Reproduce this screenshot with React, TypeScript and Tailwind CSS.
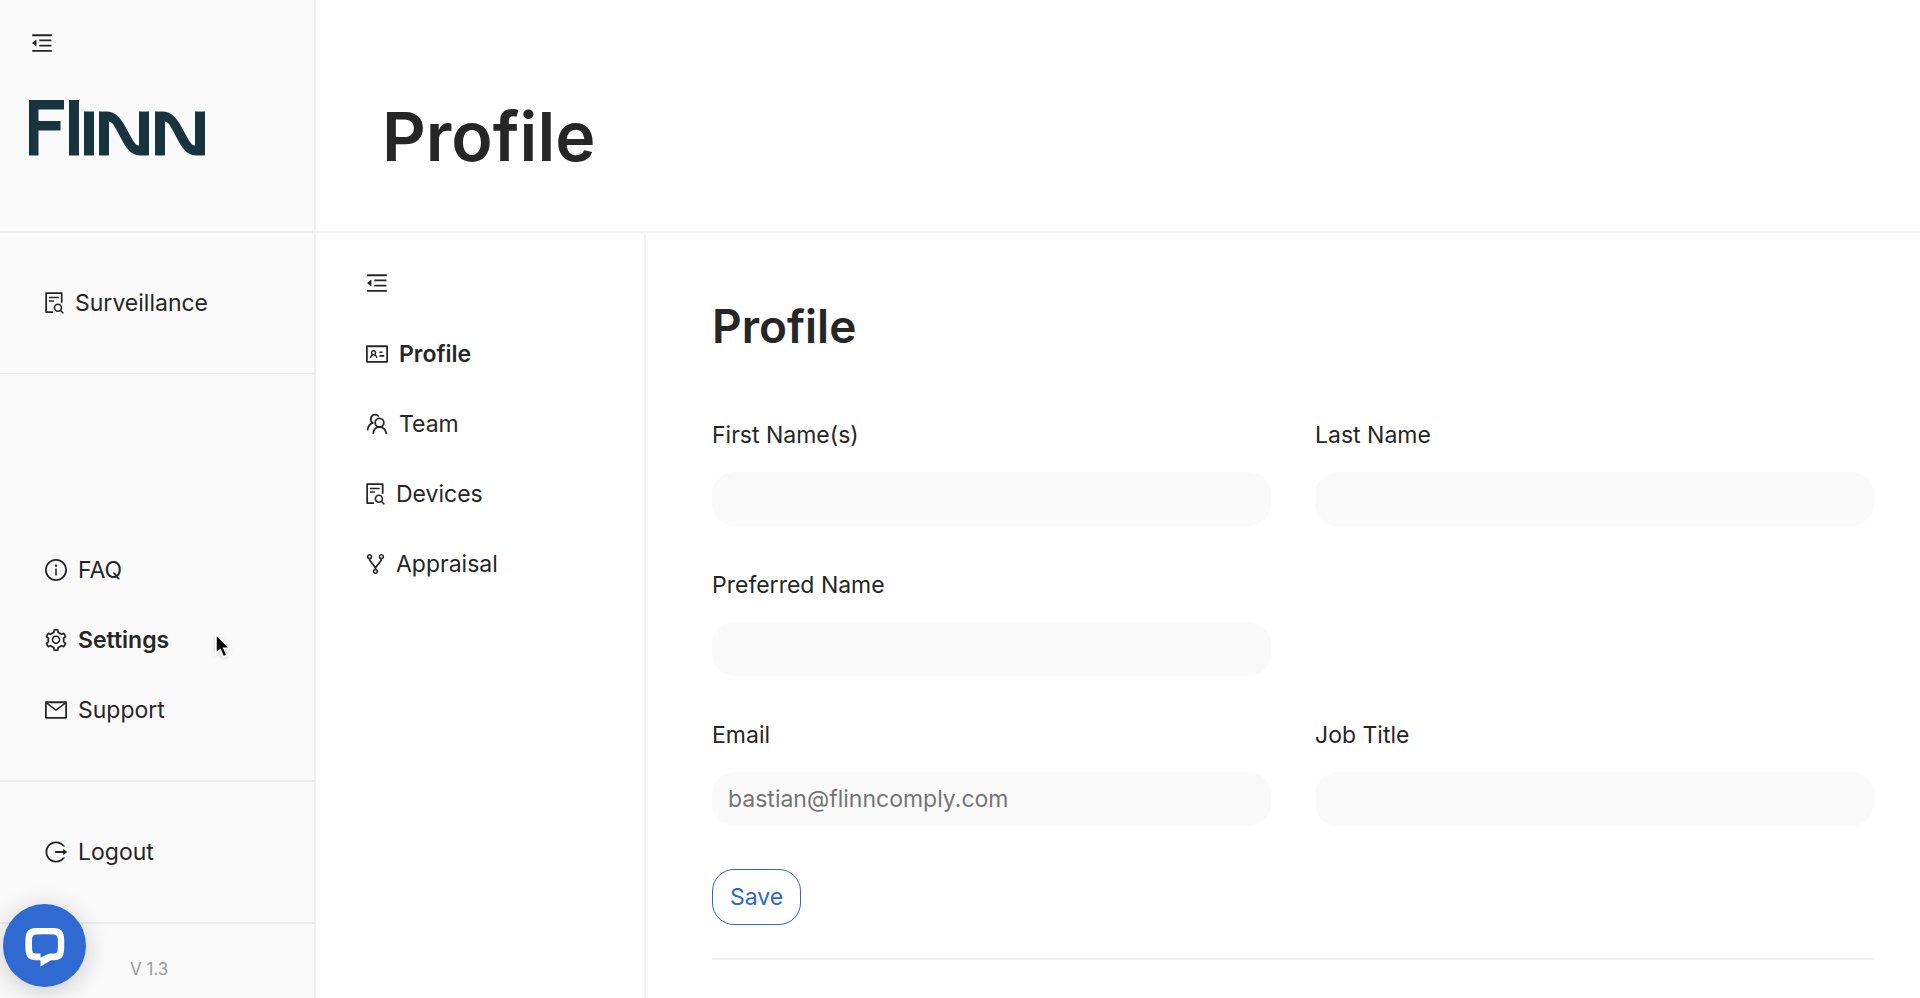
import { useState } from 'react';
import {
  AiOutlineFileSearch,
  AiOutlineFork,
  AiOutlineIdcard,
  AiOutlineInfoCircle,
  AiOutlineLogout,
  AiOutlineMail,
  AiOutlineMenuFold,
  AiOutlineSetting,
} from 'react-icons/ai';

// Trims the empty margin that the icons carry in their 1024 grid
const wide = { viewBox: '64 64 896 896', width: 22, height: 22, className: 'h-[22px] w-[22px]' };
const narrow = { viewBox: '128 64 768 896', width: 19, height: 22, className: 'h-[22px] w-[19px]' };

const Logo = () => (
  <svg width="177" height="56" viewBox="0 0 177 56" fill="#18343f" aria-label="Flinn">
    <path d="M0 0H35V9.500H9.500V21H31.500V30.500H9.500V55.500H0Z" />
    <path d="M40 0H50V55.500H40Z" />
    <path d="M55 11.500H65V55.500H55Z" />
    <path id="n" d="M70 11.500H77C86 11.500 91 17 96 26L102 37C105 42.500 107 45.500 110 45.500V11.500H120V55.500H112C104 55.500 99 51 94 42L87 29C84 24 83 22 80 21.500V55.500H70Z" />
    <use href="#n" x="56" />
  </svg>
);

const TeamIcon = () => (
  <svg width="22" height="22" viewBox="0 0 22 22" fill="none" stroke="currentColor" strokeWidth="1.800" strokeLinecap="round">
    <circle cx="13.500" cy="9.700" r="4.300" />
    <path d="M7.300 20.200C7.700 16.500 10 14.100 13.500 14.100S19.500 16.500 20.300 20.200" />
    <path d="M12.300 3C10.300 .9 6.700 1.200 5.300 3.900C4.300 6.200 4.700 8.300 6.600 9.900C3.700 11.200 2 13.500 1.700 16.600" />
  </svg>
);

const ChatIcon = () => (
  <svg width="40" height="39" viewBox="0 0 40 39" fill="none">
    <path
      fill="#fff"
      fillRule="evenodd"
      d="M10 0Q20 -.8 30 0Q38.500 .5 39 9Q39.500 16 39 23Q38.500 32 30 32.200H26L15.500 38.500V32.200H10Q1 32 .6 23Q.2 16 .6 9Q1 .5 10 0ZM10.500 6.500Q7.500 7 7.200 10Q6.800 16 7.200 22Q7.500 25.500 10.500 25.500H15.500V29.500L24.500 25.500H29.500Q32.300 25.500 32.700 22Q33.100 16 32.700 10Q32.300 7 29.500 6.500Q20 5.800 10.500 6.500Z"
    />
  </svg>
);

const Cursor = () => (
  <svg className="pointer-events-none absolute left-[213px] top-[632px] drop-shadow-sm" width="20" height="28" viewBox="0 0 20 28">
    <path
      d="M3 2.500V21.500L7.300 17.500L10.300 24.800L13.800 23.300L10.800 16.200H16.700Z"
      fill="#000"
      stroke="#fff"
      strokeWidth="1.500"
    />
  </svg>
);

const NavItem = ({ icon, label, active = false }: any) => (
  <a href="#" className={`flex h-[70px] items-center gap-[11px] text-[23px] ${active ? 'font-semibold' : ''}`}>
    {icon}
    {label}
  </a>
);

const Field = ({ id, label, type = 'text', placeholder, className = '' }: any) => {
  const [value, setValue] = useState('');

  return (
    <div className={className}>
      <label htmlFor={id} className="block text-[23px] leading-[30px]">{label}</label>
      <input
        id={id}
        type={type}
        value={value}
        placeholder={placeholder}
        onChange={(e) => setValue(e.target.value)}
        className="mt-[22px] h-[54px] w-full rounded-[22px] bg-[#fafafa] px-4 text-[23px] placeholder:text-[#757575]"
      />
    </div>
  );
};

export default function App() {
  return (
    <div className="relative flex min-h-screen bg-white font-['Inter',sans-serif] text-[#262626]">
      {/* Main sidebar */}
      <aside className="flex w-[316px] shrink-0 flex-col border-r-2 border-[#eeeeee] bg-[#fafafa]">
        <div className="h-[233px] border-b-2 border-[#eeeeee] px-[29px] pt-8">
          <button className="ml-0.5 block" aria-label="Collapse menu">
            <AiOutlineMenuFold {...wide} />
          </button>
          <div className="mt-[46px]">
            <Logo />
          </div>
        </div>
        <nav className="border-b border-[#e8e8e8] px-[45px] py-[35px]">
          <NavItem icon={<AiOutlineFileSearch {...narrow} />} label="Surveillance" />
        </nav>
        <nav className="mt-auto border-b-2 border-[#eeeeee] px-[45px] pb-[35px]">
          <NavItem icon={<AiOutlineInfoCircle {...wide} />} label="FAQ" />
          <NavItem icon={<AiOutlineSetting {...wide} />} label="Settings" active />
          <NavItem icon={<AiOutlineMail {...wide} />} label="Support" />
        </nav>
        <nav className="border-b-2 border-[#eeeeee] px-[45px] py-[35px]">
          <NavItem icon={<AiOutlineLogout {...wide} />} label="Logout" />
        </nav>
        <p className="pt-[33px] pb-[17px] pl-[130px] text-[17px] leading-6 text-[#999999]">V 1.3</p>
      </aside>

      <div className="flex min-w-0 flex-1 flex-col">
        <header className="flex h-[233px] items-center border-b-2 border-[#f3f3f3] px-[66px] pt-10">
          <h1 className="text-[68px] leading-[80px] font-semibold">Profile</h1>
        </header>

        <div className="flex flex-1">
          {/* Settings menu */}
          <aside className="w-[330px] shrink-0 border-r-2 border-[#f3f3f3] pt-[39px] pl-[50px]">
            <button className="block" aria-label="Collapse settings menu">
              <AiOutlineMenuFold {...wide} />
            </button>
            <nav className="mt-[25px]">
              <NavItem icon={<AiOutlineIdcard {...wide} />} label="Profile" active />
              <NavItem icon={<TeamIcon />} label="Team" />
              <NavItem icon={<AiOutlineFileSearch {...narrow} />} label="Devices" />
              <NavItem icon={<AiOutlineFork {...narrow} />} label="Appraisal" />
            </nav>
          </aside>

          <main className="min-w-0 flex-1 pt-[65px] pr-[46px] pl-[66px]">
            <h2 className="text-[46px] leading-[56px] font-semibold">Profile</h2>
            <form className="mt-[66px] border-b-2 border-[#f0f0f0] pb-[33px]" onSubmit={(e) => e.preventDefault()}>
              <div className="grid grid-cols-2 gap-11">
                <Field id="firstName" label="First Name(s)" />
                <Field id="lastName" label="Last Name" />
                <Field id="preferredName" label="Preferred Name" className="col-start-1" />
                <Field id="email" label="Email" type="email" placeholder="bastian@flinncomply.com" className="col-start-1" />
                <Field id="jobTitle" label="Job Title" />
              </div>
              <button className="mt-[43px] h-14 rounded-[22px] border border-[#2f68c9] px-[17px] text-[23px] text-[#2f68c9]">
                Save
              </button>
            </form>
          </main>
        </div>
      </div>

      {/* Support chat */}
      <button
        aria-label="Open chat"
        className="fixed bottom-[11px] left-[3px] flex size-[83px] items-center justify-center rounded-full bg-[#2f69d2] pt-1 shadow-[0_4px_24px_rgba(0,0,0,0.2)]"
      >
        <ChatIcon />
      </button>
      <Cursor />
    </div>
  );
}
